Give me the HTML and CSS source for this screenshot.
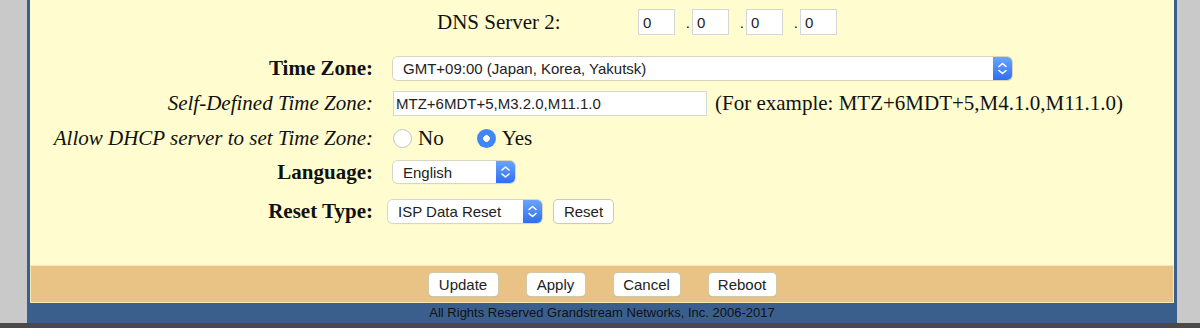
FILE: index.html
```html
<!DOCTYPE html>
<html>
<head>
    <title>Basic Settings</title>
    <link rel="stylesheet" href="styles.css">
</head>
<body>
    <div class="frame">
        <div class="content">
            <!-- DNS Zeile -->
            <div class="dns-row">
                <span class="dns-label">DNS Server 2:</span>
                <input type="text" class="ip" value="0">
                <span class="dot">.</span><input type="text" class="ip" value="0">
                <span class="dot">.</span><input type="text" class="ip" value="0">
                <span class="dot">.</span><input type="text" class="ip" value="0">
            </div>

            <div class="settings">
                <div class="label bold">Time Zone:</div>
                <div class="value">
                    <span class="sel sel-tz">
                        <select><option>GMT+09:00 (Japan, Korea, Yakutsk)</option></select>
                        <span class="arrow"><svg width="19" height="23" viewBox="0 0 19 23"><path d="M6 9.5 L9.5 6.5 L13 9.5 M6 13.5 L9.5 16.5 L13 13.5" fill="none" stroke="#fff" stroke-width="1.6" stroke-linecap="round" stroke-linejoin="round"/></svg></span>
                    </span>
                </div>

                <div class="label italic">Self-Defined Time Zone:</div>
                <div class="value">
                    <input type="text" class="tz-input" value="MTZ+6MDT+5,M3.2.0,M11.1.0">
                    <span class="hint">(For example: MTZ+6MDT+5,M4.1.0,M11.1.0)</span>
                </div>

                <div class="label italic">Allow DHCP server to set Time Zone:</div>
                <div class="value">
                    <label class="radio"><input type="radio" name="dhcp"> No</label>
                    <label class="radio"><input type="radio" name="dhcp" checked> Yes</label>
                </div>

                <div class="label bold">Language:</div>
                <div class="value">
                    <span class="sel sel-lang">
                        <select><option>English</option></select>
                        <span class="arrow"><svg width="19" height="22" viewBox="0 0 19 22"><path d="M6 9 L9.5 6 L13 9 M6 13 L9.5 16 L13 13" fill="none" stroke="#fff" stroke-width="1.6" stroke-linecap="round" stroke-linejoin="round"/></svg></span>
                    </span>
                </div>

                <div class="label bold">Reset Type:</div>
                <div class="value reset-value">
                    <span class="sel sel-reset">
                        <select><option>ISP Data Reset</option></select>
                        <span class="arrow"><svg width="19" height="23" viewBox="0 0 19 23"><path d="M6 9.5 L9.5 6.5 L13 9.5 M6 13.5 L9.5 16.5 L13 13.5" fill="none" stroke="#fff" stroke-width="1.6" stroke-linecap="round" stroke-linejoin="round"/></svg></span>
                    </span>
                    <button class="btn btn-reset">Reset</button>
                </div>
            </div>
        </div>

        <!-- Aktionsleiste -->
        <div class="actions">
            <button class="btn">Update</button>
            <button class="btn">Apply</button>
            <button class="btn">Cancel</button>
            <button class="btn">Reboot</button>
        </div>

        <div class="footer">All Rights Reserved Grandstream Networks, Inc. 2006-2017</div>
    </div>
    <div class="bottom-strip"></div>
</body>
</html>
```

FILE: styles.css
```css
body {
    margin: 0;
    background-color: #c9c9c9;
    font-family: "Liberation Serif", "Times New Roman", serif;
    color: #111;
    height: 328px;
    overflow: hidden;
}
.frame {
    margin-left: 27px;
    width: 1144px;
    padding: 0 3px;
    background-color: #3b5f8d;
}
.content {
    background-color: #fffdd0;
    height: 265px;
}
.dns-row {
    display: flex;
    align-items: center;
    height: 44px;
    padding-left: 407px;
    margin-bottom: 7px;
}
.dns-label {
    font-size: 21px;
    width: 201px;
}
.ip {
    width: 37px;
    height: 26px;
    box-sizing: border-box;
    border: 1px solid #d6d6d6;
    background: #fff;
    font-family: "Liberation Sans", Arial, sans-serif;
    font-size: 15px;
    padding: 0 4px;
    color: #222;
}
.dot {
    font-family: "Liberation Sans", Arial, sans-serif;
    font-size: 15px;
    width: 17px;
    text-align: right;
    padding-right: 2px;
    box-sizing: border-box;
}
.settings {
    display: grid;
    grid-template-columns: 343px 1fr;
    grid-template-rows: 35px 35px 34px 34px 44px;
    column-gap: 15px;
    align-items: center;
}
.label {
    font-size: 21px;
    text-align: right;
}
.bold {
    font-weight: bold;
}
.italic {
    font-style: italic;
}
.value {
    display: flex;
    align-items: center;
    padding-left: 5px;
}
.reset-value {
    padding-left: 0;
}
.sel {
    display: inline-flex;
    background: #fff;
    border-radius: 5px;
    overflow: hidden;
    box-shadow: 0 0 0 1px #d9d6c0, 0 1px 1px rgba(0, 0, 0, 0.12);
}
.sel select {
    appearance: none;
    -webkit-appearance: none;
    border: none;
    background: #fff;
    font-family: "Liberation Sans", Arial, sans-serif;
    font-size: 15px;
    color: #222;
    padding: 0 10px;
    flex: 1;
    outline: none;
}
.arrow {
    width: 19px;
    display: flex;
    background: linear-gradient(#6aa5fa, #2f6ef2);
}
.sel-tz {
    width: 619px;
    height: 23px;
}
.sel-lang {
    width: 122px;
    height: 22px;
}
.sel-reset {
    width: 154px;
    height: 23px;
}
.tz-input {
    width: 314px;
    height: 25px;
    box-sizing: border-box;
    border: 1px solid #d6d6d6;
    background: #fff;
    font-family: "Liberation Sans", Arial, sans-serif;
    font-size: 15px;
    padding: 0 2px;
    color: #222;
}
.hint {
    font-size: 21px;
    margin-left: 8px;
}
.radio {
    display: flex;
    align-items: center;
    font-size: 21px;
    margin-right: 33px;
}
.radio input {
    appearance: none;
    -webkit-appearance: none;
    width: 19px;
    height: 19px;
    margin: 0 6px 0 0;
    border-radius: 50%;
    border: 1px solid #c4c4c4;
    background: #fff;
    box-sizing: border-box;
}
.radio input:checked {
    border: none;
    background: radial-gradient(circle, #fff 0, #fff 3px, #3f87f5 3.6px);
}
.btn {
    font-family: "Liberation Sans", Arial, sans-serif;
    font-size: 15px;
    color: #222;
    background: #fff;
    border: none;
    border-radius: 4px;
    box-shadow: 0 0 0 1px #d2c9a8, 0 1px 1px rgba(0, 0, 0, 0.15);
    height: 23px;
    padding: 0 12px;
}
.btn-reset {
    margin-left: 12px;
    width: 59px;
    padding: 0;
}
.actions {
    height: 36px;
    border: 1px solid #f6e7b4;
    background-color: #e9c286;
    display: flex;
    justify-content: center;
    align-items: center;
    gap: 29px;
}
.actions .btn {
    padding: 0;
}
.actions .btn:nth-child(1) { width: 69px; }
.actions .btn:nth-child(2) { width: 58px; }
.actions .btn:nth-child(3) { width: 66px; }
.actions .btn:nth-child(4) { width: 67px; }
.footer {
    height: 20px;
    line-height: 20px;
    text-align: center;
    font-family: "Liberation Sans", Arial, sans-serif;
    font-size: 13px;
    color: #111;
}
.bottom-strip {
    height: 5px;
    background-color: #4a4a4a;
}
```
